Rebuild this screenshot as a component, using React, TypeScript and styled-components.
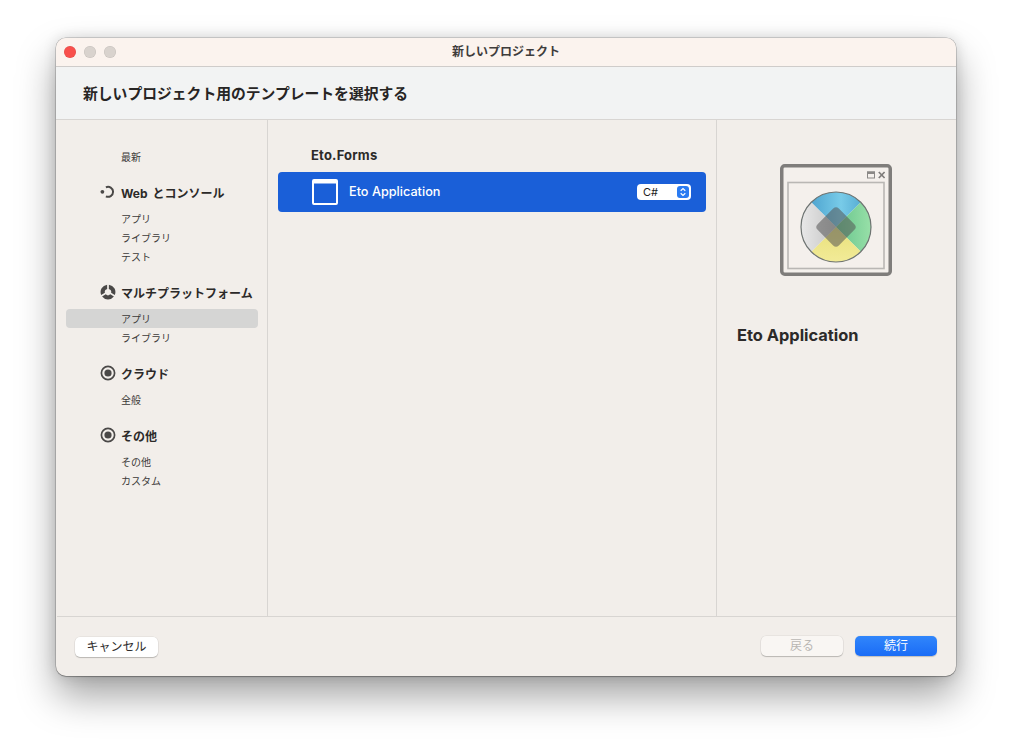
import React from 'react';
import styled, { createGlobalStyle } from 'styled-components';

const GlobalStyle = createGlobalStyle`
  html, body {
    margin: 0;
    padding: 0;
    background: #fff;
    font-family: Inter, "Noto Sans CJK JP", sans-serif;
  }
`;

const Page = styled.div`
  width: 1012px;
  height: 750px;
  padding: 38px 56px 0;
  box-sizing: border-box;
  overflow: hidden;
`;

const Window = styled.div`
  width: 900px;
  height: 638px;
  display: flex;
  flex-direction: column;
  border-radius: 10px;
  overflow: hidden;
  background: #f2eeea;
  box-shadow: 0 0 0 0.5px rgba(0, 0, 0, 0.28), 0 1px 1px rgba(0, 0, 0, 0.2), 0 20px 38px rgba(0, 0, 0, 0.36), 0 0 14px rgba(0, 0, 0, 0.14);
`;

const TitleBar = styled.div`
  height: 29px;
  flex: none;
  box-sizing: border-box;
  display: flex;
  align-items: center;
  background: #fbf3ee;
  border-bottom: 1px solid #cfccca;
`;

const Traffic = styled.div`
  display: flex;
  gap: 8px;
  margin-left: 8px;
`;

const Light = styled.span<{ $color: string }>`
  width: 12px;
  height: 12px;
  border-radius: 50%;
  background: ${(p) => p.$color};
  box-shadow: inset 0 0 0 0.5px rgba(0, 0, 0, 0.1);
`;

const WindowTitle = styled.div`
  flex: 1;
  margin-right: 60px;
  padding-bottom: 3px;
  text-align: center;
  font-size: 12px;
  font-weight: 700;
  color: #3f3d3c;
`;

const Header = styled.div`
  height: 53px;
  flex: none;
  box-sizing: border-box;
  display: flex;
  align-items: center;
  padding: 0 27px 2px;
  background: #f2f3f3;
  border-bottom: 1px solid #d8d5d2;
  font-size: 14.8px;
  font-weight: 700;
  color: #272524;
`;

const Body = styled.div`
  flex: 1;
  min-height: 0;
  display: flex;
`;

const Sidebar = styled.div`
  width: 212px;
  flex: none;
  padding: 27px 9px 0 10px;
  box-sizing: border-box;
  border-right: 1px solid #d8d5d2;
`;

const Group = styled.div<{ $gap: number }>`
  margin-top: ${(p) => p.$gap}px;
`;

const GroupHeading = styled.div`
  height: 18px;
  margin-bottom: 8px;
  display: flex;
  align-items: center;
  gap: 5px;
  padding-left: 34px;
  font-size: 12px;
  font-weight: 700;
  word-spacing: 2px;
  color: #2c2a29;
  white-space: nowrap;
`;

const NavItem = styled.div<{ $selected?: boolean }>`
  height: 19px;
  line-height: 20px;
  padding-left: 55px;
  border-radius: 4px;
  font-size: 10px;
  color: #3c3a39;
  background: ${(p) => (p.$selected ? '#d5d5d4' : 'transparent')};
`;

const Center = styled.div`
  flex: 1;
  min-width: 0;
  padding: 26px 10px 0;
  border-right: 1px solid #d8d5d2;
`;

const SectionTitle = styled.div`
  height: 18px;
  line-height: 18px;
  padding-left: 33px;
  margin-bottom: 8px;
  font-size: 13px;
  font-weight: 700;
  letter-spacing: 0.2px;
  color: #2c2a29;
`;

const TemplateRow = styled.div`
  height: 40px;
  display: flex;
  align-items: center;
  padding: 0 15px 0 34px;
  border-radius: 4px;
  background: #1a5fd8;
  color: #fff;
`;

const TemplateName = styled.div`
  flex: 1;
  margin-left: 11px;
  padding-bottom: 1px;
  font-size: 12.7px;
  font-weight: 500;
`;

const LangSelect = styled.div`
  width: 54px;
  height: 16px;
  display: flex;
  align-items: center;
  justify-content: space-between;
  padding: 0 2px 0 6px;
  box-sizing: border-box;
  border-radius: 4px;
  background: #fff;
  color: #222;
  font-size: 11px;
`;

const Stepper = styled.span`
  width: 12px;
  height: 12px;
  display: flex;
  border-radius: 3px;
  background: #2a7bf2;
`;

const Details = styled.div`
  width: 239px;
  flex: none;
  box-sizing: border-box;
  padding: 42px 20px 0;
`;

const Preview = styled.div`
  height: 116px;
  padding-left: 41px;
`;

const DetailsTitle = styled.div`
  margin-top: 47px;
  height: 20px;
  line-height: 20px;
  font-size: 16.4px;
  font-weight: 700;
  color: #2c2a29;
`;

const Footer = styled.div`
  height: 60px;
  flex: none;
  box-sizing: border-box;
  display: flex;
  align-items: flex-start;
  padding: 19px 19px 0;
  margin-left: 1px;
  border-top: 1px solid #d8d5d2;
`;

const Button = styled.button<{ $variant?: 'primary' | 'disabled' }>`
  width: 82px;
  height: 20px;
  padding: 0;
  border: none;
  border-radius: 5px;
  font-family: inherit;
  font-size: 12px;
  line-height: 20px;
  color: ${(p) => (p.$variant === 'primary' ? '#fff' : p.$variant === 'disabled' ? '#b9b6b3' : '#2e2c2b')};
  background: ${(p) =>
    p.$variant === 'primary'
      ? 'linear-gradient(#3186fb, #1a6cf6)'
      : p.$variant === 'disabled'
        ? '#f9f6f3'
        : '#fff'};
  box-shadow: ${(p) =>
    p.$variant === 'primary'
      ? '0 0.5px 1px rgba(0, 0, 0, 0.2)'
      : '0 0 0 0.5px rgba(0, 0, 0, 0.08), 0 1px 1px rgba(0, 0, 0, 0.2)'};
`;

const CancelButton = styled(Button)`
  width: 83px;
  margin: 1px auto 0 -1px;
`;

const BackButton = styled(Button)`
  margin-right: 12px;
`;

const WebIcon = () => (
  <svg width="16" height="16" viewBox="0 0 16 16" fill="none">
    <circle cx="2.4" cy="7.8" r="1.9" fill="#4a4847" />
    <path d="M5.9 3.3 A5 5 0 1 1 5.9 12.3" stroke="#4a4847" strokeWidth="2" />
  </svg>
);

const PlatformIcon = () => (
  <svg width="16" height="16" viewBox="0 0 16 16" fill="#4a4847">
    <path d="M8.9 0.66 A7.4 7.4 0 0 1 14.81 10.89 L11.09 8.83 A3.2 3.2 0 0 0 8.83 4.91 Z" />
    <path d="M7.1 0.66 A7.4 7.4 0 0 0 1.19 10.89 L4.91 8.83 A3.2 3.2 0 0 1 7.17 4.91 Z" />
    <path d="M13.91 12.45 A7.4 7.4 0 0 1 2.09 12.45 L5.74 10.26 A3.2 3.2 0 0 0 10.26 10.26 Z" />
  </svg>
);

const RadioIcon = () => (
  <svg width="16" height="16" viewBox="0 0 16 16" fill="none">
    <circle cx="8" cy="8" r="6.6" stroke="#4a4847" strokeWidth="1.7" />
    <circle cx="8" cy="8" r="3.6" fill="#4a4847" />
  </svg>
);

const WindowGlyph = () => (
  <svg width="26" height="26" viewBox="0 0 26 26" fill="none">
    <rect x="1" y="1" width="24" height="24" rx="1" stroke="#fff" strokeWidth="2" />
    <rect x="1" y="1" width="24" height="3.5" fill="#fff" />
  </svg>
);

const StepperGlyph = () => (
  <svg width="12" height="12" viewBox="0 0 12 12" fill="none" stroke="#fff" strokeWidth="1.2">
    <path d="M3.7 4.7 L6 2.5 L8.3 4.7" />
    <path d="M3.7 7.3 L6 9.5 L8.3 7.3" />
  </svg>
);

const EtoPreview = () => (
  <svg width="116" height="116" viewBox="0 0 116 116" fill="none">
    <defs>
      <linearGradient id="blue" x1="0" y1="0" x2="1" y2="0">
        <stop offset="0" stopColor="#4fa5d0" />
        <stop offset="0.6" stopColor="#78cbe8" />
        <stop offset="1" stopColor="#58aed4" />
      </linearGradient>
      <linearGradient id="green" x1="0" y1="0" x2="1" y2="0">
        <stop offset="0" stopColor="#66c48c" />
        <stop offset="1" stopColor="#98e0a8" />
      </linearGradient>
      <linearGradient id="yellow" x1="0" y1="0" x2="0" y2="1">
        <stop offset="0" stopColor="#e8e07a" />
        <stop offset="1" stopColor="#f2eb98" />
      </linearGradient>
      <linearGradient id="gray" x1="0" y1="0" x2="1" y2="0">
        <stop offset="0" stopColor="#e8e8e8" />
        <stop offset="1" stopColor="#c4c4c4" />
      </linearGradient>
    </defs>
    <rect x="3.75" y="3.75" width="108.5" height="108.5" rx="3" fill="#f4f0ec" stroke="#7f7d7b" strokeWidth="3.5" />
    <rect x="10" y="20.5" width="96" height="86" stroke="#b9b7b4" strokeWidth="1.6" />
    <rect x="89.5" y="10" width="7" height="6" stroke="#8a8886" strokeWidth="1" />
    <rect x="89" y="9.5" width="8" height="2.5" fill="#8a8886" />
    <path d="M100.8 10 L106.6 16 M106.6 10 L100.8 16" stroke="#7f7d7b" strokeWidth="1.7" />
    <path d="M33.2 40.2 A35 35 0 0 1 82.8 40.2 L58 65 Z" fill="url(#blue)" />
    <path d="M82.8 40.2 A35 35 0 0 1 82.8 89.8 L58 65 Z" fill="url(#green)" />
    <path d="M82.8 89.8 A35 35 0 0 1 33.2 89.8 L58 65 Z" fill="url(#yellow)" />
    <path d="M33.2 89.8 A35 35 0 0 1 33.2 40.2 L58 65 Z" fill="url(#gray)" />
    <circle cx="58" cy="65" r="35" stroke="#6e7472" strokeWidth="1.2" />
    <rect x="43" y="50" width="30" height="30" rx="4" transform="rotate(45 58 65)" fill="#555" fillOpacity="0.55" />
  </svg>
);

const App: React.FC = () => {
  return (
    <>
      <GlobalStyle />
      <Page>
        <Window>
          <TitleBar>
            <Traffic>
              <Light $color="#f8504c" />
              <Light $color="#d9d3ce" />
              <Light $color="#d9d3ce" />
            </Traffic>
            <WindowTitle>新しいプロジェクト</WindowTitle>
          </TitleBar>
          <Header>新しいプロジェクト用のテンプレートを選択する</Header>
          <Body>
            <Sidebar>
              <NavItem>最新</NavItem>
              <Group $gap={17}>
                <GroupHeading>
                  <WebIcon />
                  Web とコンソール
                </GroupHeading>
                <NavItem>アプリ</NavItem>
                <NavItem>ライブラリ</NavItem>
                <NavItem>テスト</NavItem>
              </Group>
              <Group $gap={17}>
                <GroupHeading>
                  <PlatformIcon />
                  マルチプラットフォーム
                </GroupHeading>
                <NavItem $selected>アプリ</NavItem>
                <NavItem>ライブラリ</NavItem>
              </Group>
              <Group $gap={17}>
                <GroupHeading>
                  <RadioIcon />
                  クラウド
                </GroupHeading>
                <NavItem>全般</NavItem>
              </Group>
              <Group $gap={17}>
                <GroupHeading>
                  <RadioIcon />
                  その他
                </GroupHeading>
                <NavItem>その他</NavItem>
                <NavItem>カスタム</NavItem>
              </Group>
            </Sidebar>
            <Center>
              <SectionTitle>Eto.Forms</SectionTitle>
              <TemplateRow>
                <WindowGlyph />
                <TemplateName>Eto Application</TemplateName>
                <LangSelect>
                  C#
                  <Stepper>
                    <StepperGlyph />
                  </Stepper>
                </LangSelect>
              </TemplateRow>
            </Center>
            <Details>
              <Preview>
                <EtoPreview />
              </Preview>
              <DetailsTitle>Eto Application</DetailsTitle>
            </Details>
          </Body>
          <Footer>
            <CancelButton>キャンセル</CancelButton>
            <BackButton $variant="disabled">戻る</BackButton>
            <Button $variant="primary">続行</Button>
          </Footer>
        </Window>
      </Page>
    </>
  );
};

export default App;
